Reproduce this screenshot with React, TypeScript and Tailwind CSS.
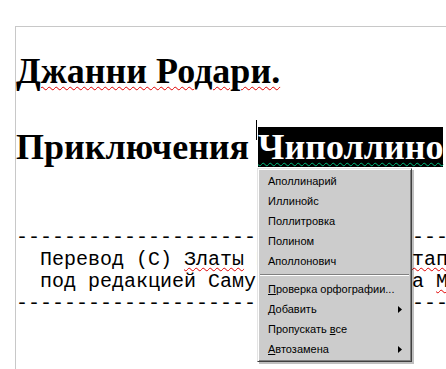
import React from "react";

const serif = { fontFamily: '"Liberation Serif", "Times New Roman", serif' };
const mono = { fontFamily: '"Liberation Mono", "Courier New", monospace' };
const ui = { fontFamily: '"Liberation Sans", Arial, sans-serif' };

function Arrow() {
  return (
    <svg width="4" height="7" viewBox="0 0 4 7" className="block">
      <polygon points="0,0 4,3.5 0,7" fill="#000" />
    </svg>
  );
}

function Item({ children, arrow }: { children: React.ReactNode; arrow?: boolean }) {
  return (
    <div className="h-[20px] flex items-center pl-[10px] pr-[9px] justify-between text-[11px] text-black leading-none">
      <span>{children}</span>
      {arrow ? <Arrow /> : null}
    </div>
  );
}

const dashes = "---------------------------------------";

export default function App() {
  return (
    <div className="w-[446px] h-[369px] bg-white overflow-hidden relative">
      <div className="pt-[26px] pl-[15px] h-full">
        <div className="border-t border-l border-[#c8c8c8] h-full relative">
          <div className="pt-[24px] whitespace-nowrap" style={serif}>
            <div className="text-[36px] leading-[40px] font-bold text-black">
              <span className="underline decoration-wavy decoration-[#e00000] decoration-[1px] underline-offset-[3px]">
                Джанни Родари.
              </span>
            </div>
            <div className="mt-[36px] text-[36px] leading-[40px] font-bold text-black relative">
              Приключения{" "}
              <span className="bg-black text-white underline decoration-wavy decoration-[#00c080] decoration-[1px] underline-offset-[3px]">
                Чиполлино
              </span>
            </div>
          </div>
          <div
            className="mt-[60px] text-[20px] leading-[22px] text-black whitespace-pre"
            style={mono}
          >
            <div>{dashes}</div>
            <div>
              {"  Перевод (С) "}
              <span className="underline decoration-wavy decoration-[#e00000] decoration-[1px] underline-offset-[2px]">Златы</span>
              {" Николаевны "}
              <span className="underline decoration-wavy decoration-[#e00000] decoration-[1px] underline-offset-[2px]">Потаповой</span>
            </div>
            <div>
              {"  под редакцией Самуила Яковлевича "}
              <span className="underline decoration-wavy decoration-[#e00000] decoration-[1px] underline-offset-[2px]">Маршака</span>
            </div>
            <div>{dashes}</div>
          </div>
        </div>
      </div>

      {/* caret */}
      <div className="absolute left-[256px] top-[120px] w-px h-[20px] bg-black" />

      {/* context menu */}
      <div
        className="absolute left-[257px] top-[168px] w-[155px] bg-[#cccccc] border-t border-l border-[#e4e4e4] border-r border-b border-r-[#404040] border-b-[#404040] shadow-[2px_2px_0_rgba(0,0,0,0.25),inset_1px_1px_0_#ffffff,inset_-1px_-1px_0_#808080] py-[2px]"
        style={ui}
      >
        <Item>Аполлинарий</Item>
        <Item>Иллинойс</Item>
        <Item>Поллитровка</Item>
        <Item>Полином</Item>
        <Item>Аполлонович</Item>
        <div className="h-[8px] flex flex-col justify-center px-[2px]">
          <div className="h-px bg-[#808080]" />
          <div className="h-px bg-white" />
        </div>
        <Item>
          <u className="underline-offset-[1px]">П</u>роверка орфографии...
        </Item>
        <Item arrow>
          <u className="underline-offset-[1px]">Д</u>обавить
        </Item>
        <Item>
          Пропускать <u className="underline-offset-[1px]">в</u>се
        </Item>
        <Item arrow>
          <u className="underline-offset-[1px]">А</u>втозамена
        </Item>
      </div>
    </div>
  );
}
